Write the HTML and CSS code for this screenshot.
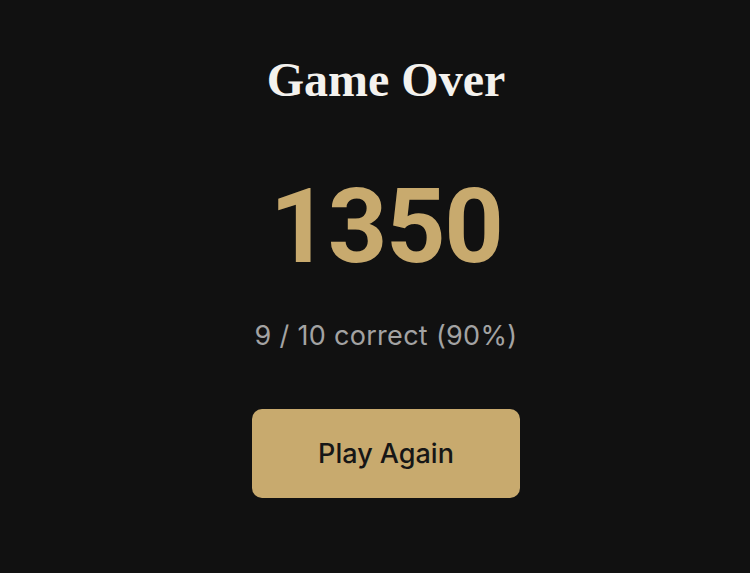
FILE: index.html
```html
<!DOCTYPE html>
<html lang="en">
<head>
<meta charset="utf-8">
<link rel="stylesheet" href="styles.css">
</head>
<body>
<main class="screen">
  <h1 class="title">Game Over</h1>
  <div class="score">1350</div>
  <p class="summary">9 / 10 correct (90%)</p>
  <button class="again">Play Again</button>
</main>
</body>
</html>
```
FILE: styles.css
```css
html, body {
  margin: 0;
  padding: 0;
  background: #111111;
  height: 100%;
}
.screen {
  display: flex;
  flex-direction: column;
  align-items: center;
  padding: 52px 0 0 22px;
  font-family: "Inter", "DejaVu Sans", sans-serif;
}
.title {
  margin: 0;
  font-family: "Liberation Serif", serif;
  font-weight: 700;
  font-size: 48px;
  line-height: 56px;
  color: #f4f2ee;
}
.score {
  margin-top: 64px;
  font-family: "Roboto", sans-serif;
  font-weight: 700;
  font-size: 104px;
  line-height: 110px;
  letter-spacing: -1.5px;
  color: #c8aa6e;
}
.summary {
  margin: 38px 0 0;
  font-size: 27px;
  line-height: 32px;
  letter-spacing: 0.3px;
  color: #a3a3a3;
}
.again {
  margin-top: 57px;
  width: 268px;
  height: 89px;
  border: none;
  border-radius: 10px;
  background: #c8aa6e;
  color: #161616;
  font-family: "Inter", sans-serif;
  font-size: 27px;
  font-weight: 500;
}
```
